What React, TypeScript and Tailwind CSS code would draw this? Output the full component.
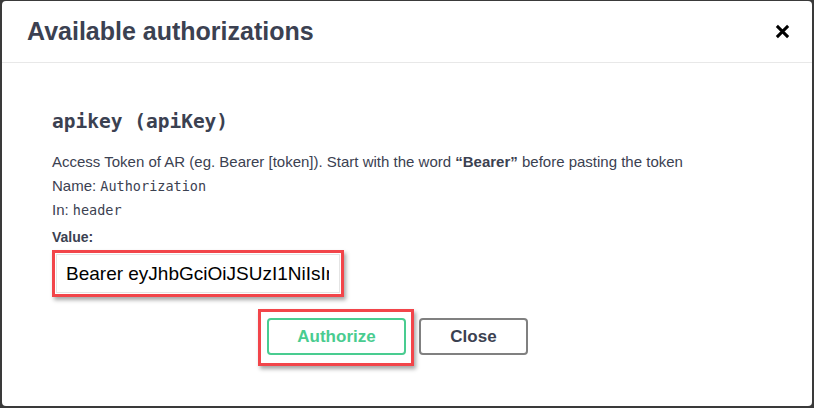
export default function App() {
  return (
    <div className="w-[814px] h-[408px] bg-[#3a3a3a] pt-px pl-[2px] pr-[2px] pb-[2px]">
      <div className="h-full bg-white rounded-[4px] flex flex-col text-[#3b4151] font-['Liberation_Sans',Arial,sans-serif]">
        {/* header */}
        <div className="h-[62px] shrink-0 border-b border-[#e8e8e8] flex items-center justify-between pl-[25px] pr-[21px]">
          <h3 className="text-[25px] font-bold leading-none">Available authorizations</h3>
          <button aria-label="Close" className="w-[18px] h-[18px] flex items-center justify-center">
            <svg viewBox="0 0 16 16" className="w-[15px] h-[15px]" stroke="#000" strokeWidth={3.2} strokeLinecap="butt">
              <path d="M2 2l12 12M14 2L2 14" />
            </svg>
          </button>
        </div>

        {/* body */}
        <div className="pl-[50px] pt-[45px]">
          <h4 className="font-['DejaVu_Sans_Mono',monospace] font-bold text-[19.5px] leading-[28px]">apikey (apiKey)</h4>
          <div className="mt-[14px] text-[15px] leading-[24px]">
            <p>
              Access Token of AR (eg. Bearer [token]). Start with the word <strong>“Bearer”</strong> before pasting the token
            </p>
            <p>
              Name: <code className="font-['DejaVu_Sans_Mono',monospace] text-[13.5px]">Authorization</code>
            </p>
            <p>
              In: <code className="font-['DejaVu_Sans_Mono',monospace] text-[13.5px]">header</code>
            </p>
          </div>
          <label className="block mt-[5px] text-[14px] font-bold leading-[20px]">Value:</label>
          <div className="mt-[3px] w-[292px] h-[47px] border-[3px] border-[#f2454a] shadow-[2px_3px_4px_rgba(0,0,0,0.35)] bg-white p-px">
            <input
              readOnly
              value="Bearer eyJhbGciOiJSUzI1NiIsInR5cCI6IkpXVCJ9"
              className="w-full h-full border border-[#e4e4e4] pl-[9px] pr-[10px] text-[19px] text-black outline-none bg-white font-['Liberation_Sans',Arial,sans-serif]"
            />
          </div>

          <div className="mt-[12px] flex items-start pl-[206px]">
            <div className="border-[3px] border-[#f2454a] shadow-[2px_3px_4px_rgba(0,0,0,0.35)] pt-[6px] pb-[8px] pl-[6px] pr-[5px]">
              <button className="w-[139px] h-[37px] border-2 border-[#49cc90] rounded-[4px] text-[#49cc90] font-bold text-[17px]">
                Authorize
              </button>
            </div>
            <button className="ml-[5px] mt-[9px] w-[109px] h-[37px] border-2 border-[#808080] rounded-[4px] text-[#3b4151] font-bold text-[17px]">
              Close
            </button>
          </div>
        </div>
      </div>
    </div>
  );
}
